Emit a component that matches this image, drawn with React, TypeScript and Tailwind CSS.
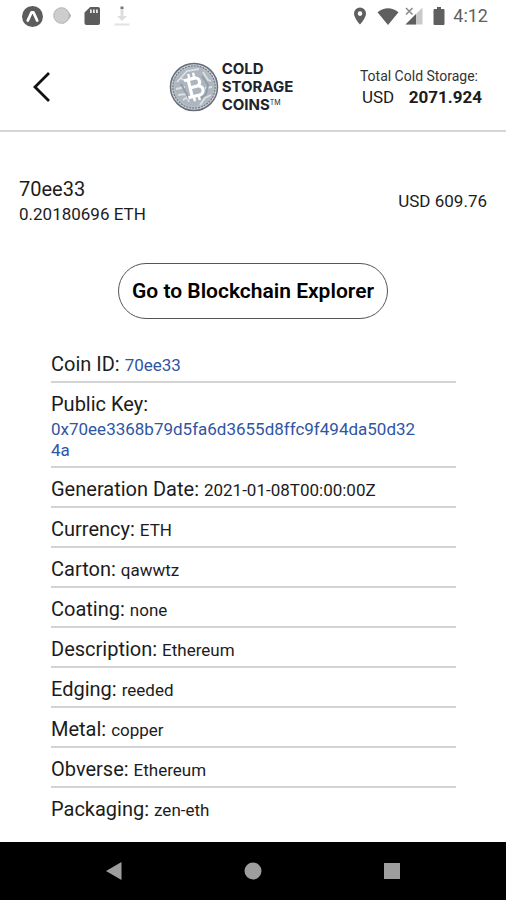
import type { ReactNode } from "react";

type Detail = { label: string; value: string; href?: string; block?: boolean };

const details: Detail[] = [
  { label: "Coin ID", value: "70ee33", href: "#coin" },
  {
    label: "Public Key",
    value: "0x70ee3368b79d5fa6d3655d8ffc9f494da50d324a",
    href: "#key",
    block: true,
  },
  { label: "Generation Date", value: "2021-01-08T00:00:00Z" },
  { label: "Currency", value: "ETH" },
  { label: "Carton", value: "qawwtz" },
  { label: "Coating", value: "none" },
  { label: "Description", value: "Ethereum" },
  { label: "Edging", value: "reeded" },
  { label: "Metal", value: "copper" },
  { label: "Obverse", value: "Ethereum" },
  { label: "Packaging", value: "zen-eth" },
];

function StatusBar() {
  return (
    <div className="flex h-8 items-center justify-between pl-[22px] pr-[18px] text-[#616161]">
      <div className="flex items-center gap-2">
        <svg className="size-[21px]" viewBox="0 0 21 21">
          <circle cx="10.5" cy="10.5" r="10.5" fill="#5c5c5c" />
          <path
            d="m5.800 14.500 3.700-8h2l3.700 8"
            fill="none"
            stroke="#fff"
            strokeWidth="2.800"
            strokeLinecap="round"
            strokeLinejoin="round"
          />
        </svg>
        <svg className="size-[22px]" viewBox="0 0 22 22">
          <path d="m13 3 7 7-1 3-7 6z" fill="#a8a8a8" />
          <circle cx="10.5" cy="10.5" r="7.8" fill="#cdcdcd" stroke="#b5b5b5" />
        </svg>
        <svg className="size-[22px]" viewBox="0 0 22 22">
          <path d="M9.2 2H17a2 2 0 0 1 2 2v14a2 2 0 0 1-2 2H5.5a2 2 0 0 1-2-2V7.5z" fill="#5c5c5c" />
          <path d="M9 4.5h1.8V8H9zm3 0h1.8V8H12zm3 0h1.8V8H15z" fill="#e8e8e8" />
        </svg>
        <svg className="size-[22px]" viewBox="0 0 22 22">
          <path d="M9.500 4h3v7h3.500l-5 5-5-5h3.500z" fill="#dedede" />
          <path d="M9.500 1.500h3v2.500h-3z" fill="#777" />
          <path d="M3.500 18.500h15v2h-15z" fill="#e2e2e2" />
        </svg>
      </div>
      <div className="flex items-center">
        <svg className="mr-[10px] h-[18px] w-[14px]" viewBox="0 0 14 18">
          <path
            d="M7 .5A6 6 0 0 0 1 6.5C1 11 7 17.5 7 17.5S13 11 13 6.5A6 6 0 0 0 7 .5m0 3.8a2.300 2.300 0 1 1 0 4.600 2.300 2.300 0 0 1 0-4.600"
            fill="#5f5f5f"
          />
        </svg>
        <svg className="mr-[6px] h-[17px] w-[22px]" viewBox="0 0 22 17">
          <path d="M.5 4.200Q11-3.500 21.500 4.200L11 17z" fill="#5f5f5f" />
        </svg>
        <svg className="mr-[10px] size-[18px]" viewBox="0 0 18 18">
          <path d="M17.500.5v17H.5z" fill="#c9c9c9" />
          <path d="M11 7v10.500H.5z" fill="#5f5f5f" />
          <path d="M0 0h9v9H0z" fill="#fff" />
          <path d="m1 1 6.500 6.500m0-6.500L1 7.500" stroke="#8c8c8c" strokeWidth="1.600" />
        </svg>
        <svg className="mr-2 h-[18px] w-3" viewBox="0 0 12 18">
          <path d="M4 0h4v2h2.500q1 0 1 1v14q0 1-1 1h-9q-1 0-1-1V3q0-1 1-1H4z" fill="#5f5f5f" />
        </svg>
        <span className="text-lg leading-6">4:12</span>
      </div>
    </div>
  );
}

function CoinLogo() {
  return (
    <svg className="size-[50px] shrink-0" viewBox="0 0 50 50" aria-hidden="true">
      <circle cx="25" cy="25" r="23.5" fill="#d3d7dc" stroke="#646d78" strokeWidth="1.5" />
      <circle cx="25" cy="25" r="21.2" fill="#b4bbc3" stroke="#717b87" strokeWidth="1.2" strokeDasharray="2 1" />
      <circle cx="25" cy="25" r="19" fill="#adb5be" />
      <path
        d="M8 20 18 9l12-2M7 27l9-2M9 33l8-1 3 8M31 43l5-7 6-3M43 25l-7 1M34 10l5 8 3 1M11 16l6 3M14 38l6-4"
        fill="none"
        stroke="#dde1e6"
        strokeWidth="1.8"
      />
      <path d="M33 14l6 9-2 9-6 5M12 22l5 9 3 6" fill="none" stroke="#929ca8" strokeWidth="2" />
      <g transform="rotate(-14 25 25)" fill="none" stroke="#fff">
        <path
          d="M17 16.500h10.500a4.200 4.200 0 0 1 0 8.400H21h7.500a4.600 4.600 0 0 1 0 9.200H17M21 16.500v17.600"
          strokeWidth="3.2"
        />
        <path d="M22.5 11v5m5-5v5m-5 18v5m5-5v5" strokeWidth="2.4" />
      </g>
    </svg>
  );
}

function Header() {
  return (
    <header className="grid h-[100px] grid-cols-[1fr_auto_1fr] items-center border-b-2 border-[#d6d6d6] pt-3">
      <button type="button" aria-label="Back" className="ml-8 w-5 justify-self-start">
        <svg className="h-8 w-5" viewBox="0 0 20 32" fill="none">
          <path d="M17 2 3 16l14 14" stroke="#111" strokeWidth="2.8" />
        </svg>
      </button>
      <div className="flex items-center gap-[3px] pr-11">
        <CoinLogo />
        <p className="font-[Inter,sans-serif] text-[15px] font-bold leading-[18px] text-[#20232b]">
          COLD
          <br />
          STORAGE
          <br />
          COINS<sup className="top-[-5px] text-[7px] font-normal leading-none">TM</sup>
        </p>
      </div>
      <div className="justify-self-end pr-6">
        <p className="pr-1 text-sm leading-5 text-[#333]">Total Cold Storage:</p>
        <p className="flex justify-between pl-[2px] text-[17px] leading-[22px]">
          <span>USD</span>
          <span className="font-bold">2071.924</span>
        </p>
      </div>
    </header>
  );
}

function DetailRow({ label, value, href, block }: Detail) {
  return (
    <li className="border-b-2 border-[#d4d4d4] pb-[5px] pt-[9px] text-xl leading-6 last:border-b-0">
      {label}:{" "}
      {href ? (
        <a
          href={href}
          className={
            block
              ? "mt-[3px] block break-all pr-9 text-[17px] leading-[21px] text-[#2f55a4]"
              : "text-[17px] leading-5 text-[#2f55a4]"
          }
        >
          {value}
        </a>
      ) : (
        <span className="text-[17px] leading-5">{value}</span>
      )}
    </li>
  );
}

function NavButton({ label, children }: { label: string; children: ReactNode }) {
  return (
    <button type="button" aria-label={label} className="flex flex-1 justify-center">
      <svg className="size-[18px]" viewBox="0 0 18 18" fill="#9e9e9e">
        {children}
      </svg>
    </button>
  );
}

export default function App() {
  return (
    <div className="flex min-h-screen flex-col bg-white font-[Roboto,sans-serif] text-[#1c1c1c]">
      <StatusBar />
      <Header />
      <main className="flex-1">
        <section className="flex items-center justify-between px-[19px] pt-11">
          <div>
            <h1 className="text-xl leading-[26px]">70ee33</h1>
            <p className="text-[17px] leading-6">0.20180696 ETH</p>
          </div>
          <p className="text-[17px] leading-6">USD 609.76</p>
        </section>

        <div className="flex justify-center pt-[37px]">
          <button
            type="button"
            className="h-14 rounded-full border border-[#555] px-[13px] pt-[2px] text-[21px] font-semibold text-black"
          >
            Go to Blockchain Explorer
          </button>
        </div>

        <ul className="ml-[51px] mr-[50px] pt-6">
          {details.map((d) => (
            <DetailRow key={d.label} {...d} />
          ))}
        </ul>
      </main>

      <nav className="flex h-[58px] items-center bg-black px-11">
        <NavButton label="Back">
          <path d="M16.5 0v18L1 9z" />
        </NavButton>
        <NavButton label="Home">
          <circle cx="9" cy="9" r="8.5" />
        </NavButton>
        <NavButton label="Recents">
          <path d="M1 1h16v16H1z" />
        </NavButton>
      </nav>
    </div>
  );
}
